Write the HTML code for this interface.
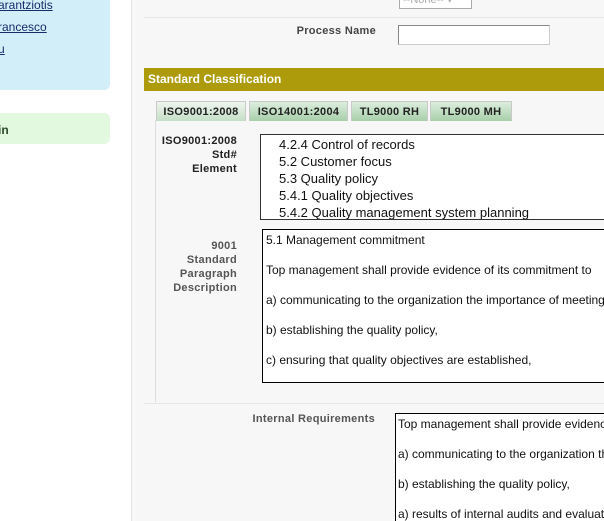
<!DOCTYPE html>
<html style="overflow:hidden"><head><style>
html,body{overflow:hidden}
body{margin:0;width:604px;height:521px;background:#fff;font-family:"Liberation Sans",Arial,sans-serif;position:relative}
.a{position:absolute}
.lnk{color:#1a2a6a;text-decoration:underline;font-size:12px}
.lbl{font-size:11px;font-weight:bold;text-align:right;line-height:14px;letter-spacing:0.3px}
.box{background:#fff;border:1px solid #000;font-size:12px;color:#111}
.tab{position:absolute;top:101px;height:19px;background:linear-gradient(#dceedd,#a7cfa9);border:1px solid #c9c9c9;border-bottom:none;font-size:11px;font-weight:bold;color:#222;text-align:center;line-height:20px;letter-spacing:0.3px}
</style></head><body>
<div class="a" style="left:-10px;top:-10px;width:120px;height:100px;background:#d2eef9;border-radius:6px"></div>
<div class="a lnk" style="left:-2px;top:-2px">arantziotis</div>
<div class="a lnk" style="left:-2px;top:20px">rancesco</div>
<div class="a lnk" style="left:-2px;top:42px">u</div>
<div class="a" style="left:-10px;top:113px;width:120px;height:31px;background:#e2f8df;border-radius:6px"></div>
<div class="a" style="left:-2px;top:123px;font-size:12px;font-weight:bold;color:#2a4a2a">in</div>

<div class="a" style="left:131px;top:0;width:473px;height:521px;background:#f7f7f7;border-left:1px solid #e4e4e4"></div>
<div class="a" style="left:399px;top:-8px;width:68px;height:15px;border:1px solid #aaa;background:#fff;font-size:11px;color:#aaa;line-height:14px;padding-left:3px">--None-- ▾</div>
<div class="a" style="left:144px;top:17px;width:460px;height:1px;background:#e6e6e6"></div>
<div class="a lbl" style="left:240px;top:24px;width:136px;color:#444">Process Name</div>
<div class="a" style="left:398px;top:25px;width:150px;height:18px;background:#fff;border:1px solid #ccc;border-top-color:#888;border-left-color:#888"></div>

<div class="a" style="left:144px;top:68px;width:460px;height:23px;background:#ad9b0c;color:#fff;font-size:12px;font-weight:bold;line-height:23px;padding-left:4px">Standard Classification</div>

<div class="a" style="left:155px;top:120px;width:449px;height:282px;border-left:1px solid #ddd"></div>
<div class="tab" style="left:156px;width:88px;background:linear-gradient(#eef5ee,#c5dfc6)">ISO9001:2008</div>
<div class="tab" style="left:249px;width:97px">ISO14001:2004</div>
<div class="tab" style="left:351px;width:75px">TL9000 RH</div>
<div class="tab" style="left:430px;width:80px">TL9000 MH</div>

<div class="a lbl" style="left:140px;top:134px;width:97px;color:#222">ISO9001:2008<br>Std#<br>Element</div>
<div class="a box" style="left:260px;top:134px;width:350px;height:86px;border-color:#333;font-size:13px;line-height:17px;padding-left:18px;box-sizing:border-box;padding-top:1px;overflow:hidden">4.2.4 Control of records<br>5.2 Customer focus<br>5.3 Quality policy<br>5.4.1 Quality objectives<br>5.4.2 Quality management system planning</div>

<div class="a lbl" style="left:140px;top:239px;width:97px;color:#555">9001<br>Standard<br>Paragraph<br>Description</div>
<div class="a box" style="left:262px;top:229px;width:350px;height:154px;line-height:15px;padding:3px 3px;box-sizing:border-box;white-space:nowrap;overflow:hidden">5.1 Management commitment<br><br>Top management shall provide evidence of its commitment to<br><br>a) communicating to the organization the importance of meeting<br><br>b) establishing the quality policy,<br><br>c) ensuring that quality objectives are established,</div>

<div class="a" style="left:144px;top:403px;width:460px;height:1px;background:#e6e6e6"></div>
<div class="a lbl" style="left:220px;top:412px;width:155px;color:#555">Internal Requirements</div>
<div class="a box" style="left:395px;top:413px;width:220px;height:120px;line-height:15px;padding:3px 2px;box-sizing:border-box;white-space:nowrap;overflow:hidden">Top management shall provide evidence<br><br>a) communicating to the organization the<br><br>b) establishing the quality policy,<br><br>a) results of internal audits and evaluation</div>
</body></html>
